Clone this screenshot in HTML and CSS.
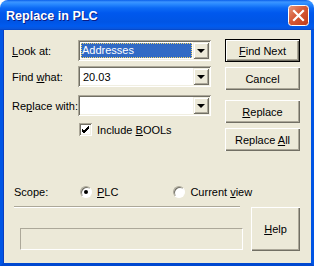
FILE: index.html
```html
<!DOCTYPE html>
<html>
<head>
<meta charset="utf-8">
<link rel="stylesheet" href="styles.css">
</head>
<body>
<div class="window">
  <div class="titlebar">
    <span class="title">Replace in PLC</span>
    <span class="close">
      <svg width="21" height="21" viewBox="0 0 21 21">
        <defs>
          <linearGradient id="cg" x1="0" y1="0" x2="1" y2="1">
            <stop offset="0" stop-color="#E8987C"/>
            <stop offset="0.45" stop-color="#D65A37"/>
            <stop offset="1" stop-color="#C03A18"/>
          </linearGradient>
        </defs>
        <rect x="0.5" y="0.5" width="20" height="20" rx="3" fill="url(#cg)" stroke="#fff"/>
        <path d="M6 6 L15 15 M15 6 L6 15" stroke="#fff" stroke-width="2.2" stroke-linecap="square"/>
      </svg>
    </span>
  </div>
  <div class="client">
    <div class="top">
      <div class="form">
        <div class="row">
          <span class="label"><u>L</u>ook at:</span>
          <div class="combo">
            <span class="field"><span class="hl">Addresses</span></span>
            <span class="drop"><span class="arrow"></span></span>
          </div>
        </div>
        <div class="row">
          <span class="label">Find <u>w</u>hat:</span>
          <div class="combo">
            <span class="field"><span class="txt">20.03</span></span>
            <span class="drop"><span class="arrow"></span></span>
          </div>
        </div>
        <div class="row row3">
          <span class="label">Re<u>p</u>lace with:</span>
          <div class="combo">
            <span class="field"></span>
            <span class="drop"><span class="arrow"></span></span>
          </div>
        </div>
        <div class="checkrow">
          <span class="checkbox">
            <svg width="9" height="9" viewBox="0 0 9 9"><path d="M1 4 L3 6 L8 1 M1 5 L3 7 L8 2 M1 6 L3 8 L8 3" stroke="#000" stroke-width="1" fill="none"/></svg>
          </span>
          <span class="checklabel">Include <u>B</u>OOLs</span>
        </div>
      </div>
      <div class="buttons">
        <div class="btn default"><span><u>F</u>ind Next</span></div>
        <div class="btn"><span>Cancel</span></div>
        <div class="btn gap"><span><u>R</u>eplace</span></div>
        <div class="btn"><span>Replace <u>A</u>ll</span></div>
      </div>
    </div>
    <div class="scope">
      <span class="scopelabel">Scope:</span>
      <span class="radio on"><span class="dot"></span></span>
      <span class="radiolabel"><u>P</u>LC</span>
      <span class="radio second"></span>
      <span class="radiolabel">Current <u>v</u>iew</span>
    </div>
    <div class="bottom">
      <div class="bleft">
        <div class="sep"></div>
        <div class="status"></div>
      </div>
      <div class="btn help"><span><u>H</u>elp</span></div>
    </div>
  </div>
</div>
</body>
</html>
```

FILE: styles.css
```css
html, body {
  margin: 0;
  padding: 0;
  background: #ffffff;
}
.window {
  width: 314px;
  height: 266px;
  display: flex;
  flex-direction: column;
  font-family: "Liberation Sans", Arial, sans-serif;
  font-size: 11px;
  color: #000;
}
.titlebar {
  height: 30px;
  flex: none;
  box-sizing: border-box;
  border-radius: 8px 8px 0 0;
  background: linear-gradient(to bottom, #0A5FEA 0, #3C95FF 2px, #2A8AFF 4px, #0C6AF5 8px, #0058EE 13px, #0055E5 22px, #005BEF 26px, #0A55DB 29px, #0040C0 30px);
  display: flex;
  align-items: center;
  justify-content: space-between;
  padding: 0 5px 0 6px;
}
.title {
  color: #fff;
  font-weight: bold;
  font-size: 12.6px;
  text-shadow: 1px 1px 0 #0A1C86;
  margin-top: 1px;
  white-space: nowrap;
}
.close {
  display: flex;
  margin-top: 1px;
}
.client {
  flex: 1;
  background: #ECE9D8;
  border-left: 3px solid #0055E5;
  border-right: 3px solid #0055E5;
  border-bottom: 3px solid #0048D0;
  box-shadow: inset 1px 0 #0A3EC0;
  padding: 9px 11px 0 9px;
  display: flex;
  flex-direction: column;
}
.top {
  display: flex;
  align-items: flex-start;
}
.form {
  width: 199px;
  display: flex;
  flex-direction: column;
}
.row {
  display: flex;
  align-items: center;
  height: 21px;
  margin-top: 1px;
  margin-bottom: 4px;
}
.row3 {
  margin-top: 4px;
}
.label {
  width: 66px;
  flex: none;
  white-space: nowrap;
}
.combo {
  width: 133px;
  height: 21px;
  box-sizing: border-box;
  padding: 2px;
  background: #fff;
  display: flex;
  box-shadow: inset 1px 1px #ACA899, inset -1px -1px #fff, inset 2px 2px #716F64, inset -2px -2px #F1EFE2;
}
.field {
  flex: 1;
  display: flex;
  align-items: center;
  padding: 1px;
}
.hl {
  flex: 1;
  height: 15px;
  box-sizing: border-box;
  background: #316AC5;
  color: #fff;
  outline: 1px dotted #F3D66A;
  outline-offset: -1px;
  padding: 0 1px;
  line-height: 15px;
}
.txt {
  padding-left: 2px;
}
.drop {
  width: 16px;
  height: 17px;
  flex: none;
  box-sizing: border-box;
  background: #ECE9D8;
  box-shadow: inset 1px 1px #F1EFE2, inset -1px -1px #716F64, inset 2px 2px #fff, inset -2px -2px #ACA899;
  display: flex;
  align-items: center;
  justify-content: center;
}
.arrow {
  width: 0;
  height: 0;
  border-left: 4px solid transparent;
  border-right: 4px solid transparent;
  border-top: 4px solid #000;
  margin-top: 1px;
}
.checkrow {
  display: flex;
  align-items: center;
  margin-top: 3px;
  margin-left: 67px;
}
.checkbox {
  width: 13px;
  height: 13px;
  box-sizing: border-box;
  background: #fff;
  box-shadow: inset 1px 1px #ACA899, inset -1px -1px #fff, inset 2px 2px #716F64, inset -2px -2px #F1EFE2;
  display: flex;
  align-items: center;
  justify-content: center;
}
.checklabel {
  margin-left: 5px;
  white-space: nowrap;
}
.buttons {
  margin-left: 14px;
  display: flex;
  flex-direction: column;
}
.btn {
  width: 75px;
  height: 23px;
  box-sizing: border-box;
  background: #ECE9D8;
  box-shadow: inset 1px 1px #fff, inset -1px -1px #716F64, inset -2px -2px #ACA899;
  display: flex;
  align-items: center;
  justify-content: center;
  margin-bottom: 5px;
  white-space: nowrap;
}
.btn.default {
  border: 1px solid #000;
  margin-bottom: 5px;
}
.btn.gap {
  margin-top: 5px;
}
.scope {
  display: flex;
  align-items: center;
  margin-top: 30px;
  padding-left: 2px;
}
.scopelabel {
  width: 66px;
}
.radio {
  width: 12px;
  height: 12px;
  box-sizing: border-box;
  border-radius: 50%;
  background: #fff;
  border: 1px solid;
  border-color: #ACA899 #fff #fff #ACA899;
  box-shadow: inset 1px 1px #716F64;
  display: flex;
  align-items: center;
  justify-content: center;
}
.dot {
  width: 4px;
  height: 4px;
  border-radius: 50%;
  background: #000;
}
.radiolabel {
  margin-left: 5px;
  white-space: nowrap;
}
.radio.second {
  margin-left: 55px;
}
.bottom {
  display: flex;
  align-items: flex-start;
  margin-top: 9px;
}
.bleft {
  width: 229px;
  display: flex;
  flex-direction: column;
  padding-left: 2px;
  margin-top: -1px;
}
.sep {
  width: 226px;
  height: 1px;
  border-bottom: 1px solid #fff;
  background: #ACA899;
}
.status {
  margin-top: 20px;
  margin-left: 6px;
  width: 223px;
  height: 22px;
  box-sizing: border-box;
  border: 1px solid;
  border-color: #ACA899 #fff #fff #ACA899;
}
.btn.help {
  width: 51px;
  height: 44px;
  margin-left: 8px;
}
```
